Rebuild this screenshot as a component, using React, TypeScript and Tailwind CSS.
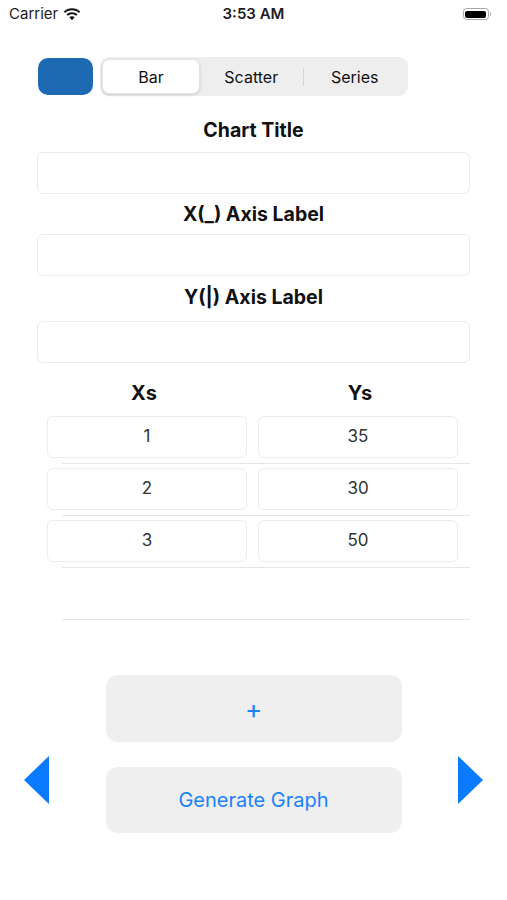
const rows = [
  { x: "1", y: "35" },
  { x: "2", y: "30" },
  { x: "3", y: "50" },
];

function StatusBar() {
  return (
    <div className="h-[28px] flex items-center justify-between px-[9px] relative text-[15px] text-[#1c1c1e]">
      <div className="flex items-center gap-[5px]">
        <span>Carrier</span>
        <svg width="18" height="13" viewBox="0 0 18 13">
          <path d="M9 2.2c2.7 0 5.1 1 7 2.7l1.3-1.4C15.1 1.4 12.2.2 9 .2S2.9 1.4.7 3.5L2 4.9c1.9-1.7 4.3-2.7 7-2.7z" fill="#111" />
          <path d="M9 6.2c1.6 0 3 .6 4.1 1.5l1.4-1.4C13 5 11.1 4.2 9 4.2S5 5 3.5 6.3l1.4 1.4C6 6.8 7.4 6.2 9 6.2z" fill="#111" />
          <path d="M9 10.2c.5 0 1 .2 1.3.5L9 12.2 7.7 10.7c.3-.3.8-.5 1.3-.5zM9 8.2c1 0 2 .4 2.7 1l-1.4 1.5c-.3-.3-.8-.5-1.3-.5s-1 .2-1.3.5L6.3 9.2c.7-.6 1.7-1 2.7-1z" fill="#111" />
        </svg>
      </div>
      <span className="absolute left-1/2 -translate-x-1/2 font-semibold">3:53 AM</span>
      <div className="flex items-center mr-[7px]">
        <div className="w-[26px] h-[12px] rounded-[3.5px] border border-[#a8a8a8] p-[1.5px]">
          <div className="w-full h-full rounded-[2px] bg-black" />
        </div>
        <div className="w-[1.5px] h-[4px] bg-[#a8a8a8] rounded-r-sm ml-[1px]" />
      </div>
    </div>
  );
}

function Label({ children, className = "" }: { children: React.ReactNode; className?: string }) {
  return <div className={`text-center text-[19.5px] leading-[24px] font-bold text-[#111] ${className}`}>{children}</div>;
}

function Field({ className = "" }: { className?: string }) {
  return <div className={`mx-[37px] h-[42px] rounded-[6px] border border-[#ebebeb] ${className}`} />;
}

function Separator() {
  return <div className="ml-[15px] h-px bg-[#e4e4e4] mb-[4px]" />;
}

export default function App() {
  return (
    <div className="w-[507px] h-[900px] bg-white overflow-hidden" style={{ fontFamily: "Inter, 'Liberation Sans', sans-serif" }}>
      <StatusBar />

      <div className="flex items-center gap-[7px] ml-[38px] mt-[29px]">
        <div className="w-[55px] h-[37px] rounded-[10px] bg-[#1d6ab3]" />
        <div className="w-[308px] h-[39px] rounded-[9px] bg-[#eeeeef] p-[2px] flex items-center text-[16px] text-[#111]">
          <div className="w-[98px] h-[35px] rounded-[7px] bg-white shadow-[0_1px_3px_rgba(0,0,0,0.15)] border border-[#e2e2e2] flex items-center justify-center">
            Bar
          </div>
          <div className="flex-1 flex items-center justify-center">Scatter</div>
          <div className="w-px h-[18px] bg-[#d6d6d8]" />
          <div className="flex-1 flex items-center justify-center">Series</div>
        </div>
      </div>

      <Label className="mt-[22px]">Chart Title</Label>
      <Field className="mt-[10px]" />
      <Label className="mt-[8px]">X(_) Axis Label</Label>
      <Field className="mt-[8px]" />
      <Label className="mt-[9px]">Y(|) Axis Label</Label>
      <Field className="mt-[12px]" />

      <div className="flex mt-[18px] text-[20px] leading-[24px] font-bold text-[#111]">
        <div className="w-[288px] text-center">Xs</div>
        <div className="w-[144px] text-center">Ys</div>
      </div>

      <div className="ml-[47px] w-[423px] mt-[11px]">
        {rows.map((r) => (
          <div key={r.x}>
            <div className="h-[47px] flex gap-[11px] text-[17px] text-[#333]">
              <div className="w-[200px] h-[42px] rounded-[6px] border border-[#ebebeb] flex items-center justify-center">{r.x}</div>
              <div className="w-[200px] h-[42px] rounded-[6px] border border-[#ebebeb] flex items-center justify-center">{r.y}</div>
            </div>
            <Separator />
          </div>
        ))}
        <div className="h-[47px]" />
        <Separator />
      </div>

      <div className="mt-[55px] flex flex-col items-center">
        <button className="w-[296px] h-[67px] rounded-[12px] bg-[#efefef] text-[26px] text-[#1a82fb] flex items-center justify-center">
          +
        </button>
      </div>

      <div className="mt-[25px] flex items-start justify-between px-[24px]">
        <svg className="-mt-[11px]" width="26" height="48" viewBox="0 0 26 48">
          <path d="M25 0v48L0 24z" fill="#0a7bff" />
        </svg>
        <button className="w-[296px] h-[66px] rounded-[12px] bg-[#efefef] text-[20px] text-[#1a82fb] flex items-center justify-center">
          Generate Graph
        </button>
        <svg className="-mt-[11px]" width="26" height="48" viewBox="0 0 26 48">
          <path d="M1 0v48l25-24z" fill="#0a7bff" />
        </svg>
      </div>
    </div>
  );
}
